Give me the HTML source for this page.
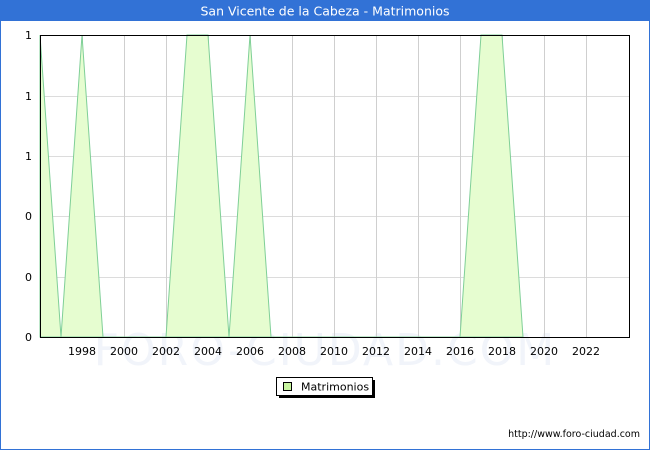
<!DOCTYPE html>
<html><head><meta charset="utf-8"><style>
body{margin:0;width:650px;height:450px;overflow:hidden;background:#fff;font-family:"DejaVu Sans","Liberation Sans",sans-serif}
</style></head><body>
<svg width="650" height="450" xmlns="http://www.w3.org/2000/svg" font-family="DejaVu Sans, Liberation Sans, sans-serif">
<rect x="0.5" y="0.5" width="649" height="449" fill="#fff" stroke="#3272d6" stroke-width="1"/>
<rect x="0" y="0" width="650" height="21" fill="#3272d6"/>
<text x="325" y="15.5" fill="#fff" font-size="12.5" text-anchor="middle">San Vicente de la Cabeza - Matrimonios</text>
<text x="325" y="365" fill="#f1f4fa" font-size="44" text-anchor="middle" letter-spacing="2">FORO-CIUDAD.COM</text>
<g stroke="#dcdcdc" stroke-width="1">
<line x1="40" y1="96.5" x2="630" y2="96.5"/><line x1="40" y1="156.5" x2="630" y2="156.5"/>
<line x1="40" y1="216.5" x2="630" y2="216.5"/><line x1="40" y1="277.5" x2="630" y2="277.5"/>
</g>
<g stroke="#cfcfcf" stroke-width="1">
<line x1="82.5" y1="35" x2="82.5" y2="338"/><line x1="124.5" y1="35" x2="124.5" y2="338"/>
<line x1="166.5" y1="35" x2="166.5" y2="338"/><line x1="208.5" y1="35" x2="208.5" y2="338"/>
<line x1="250.5" y1="35" x2="250.5" y2="338"/><line x1="292.5" y1="35" x2="292.5" y2="338"/>
<line x1="334.5" y1="35" x2="334.5" y2="338"/><line x1="376.5" y1="35" x2="376.5" y2="338"/>
<line x1="418.5" y1="35" x2="418.5" y2="338"/><line x1="460.5" y1="35" x2="460.5" y2="338"/>
<line x1="502.5" y1="35" x2="502.5" y2="338"/><line x1="544.5" y1="35" x2="544.5" y2="338"/>
<line x1="586.5" y1="35" x2="586.5" y2="338"/>
</g>
<polygon fill="#e6fdd0" stroke="#7fcf97" stroke-width="1" points="40,35 61,337 82,35 103,337 166,337 187,35 208,35 229,337 250,35 271,337 460,337 481,35 502,35 523,337 40,337"/>
<rect x="40.5" y="35.5" width="589" height="302" fill="none" stroke="#000" stroke-width="1"/>
<g font-size="11" fill="#000" text-anchor="end">
<text x="32" y="39">1</text><text x="32" y="100">1</text><text x="32" y="160">1</text>
<text x="32" y="220">0</text><text x="32" y="281">0</text><text x="32" y="341">0</text>
</g>
<g font-size="11" fill="#000" text-anchor="middle">
<text x="82" y="355">1998</text><text x="124" y="355">2000</text><text x="166" y="355">2002</text>
<text x="208" y="355">2004</text><text x="250" y="355">2006</text><text x="292" y="355">2008</text>
<text x="334" y="355">2010</text><text x="376" y="355">2012</text><text x="418" y="355">2014</text>
<text x="460" y="355">2016</text><text x="502" y="355">2018</text><text x="544" y="355">2020</text>
<text x="586" y="355">2022</text>
</g>
<rect x="279" y="380" width="96" height="18" fill="#000"/>
<rect x="276.5" y="377.5" width="96" height="18" fill="#fff" stroke="#000"/>
<rect x="283.5" y="382.5" width="8" height="8" fill="#c8f5a0" stroke="#000"/>
<text x="301" y="390.5" font-size="11" fill="#000">Matrimonios</text>
<text x="640" y="437" font-size="9.5" fill="#000" text-anchor="end">http://www.foro-ciudad.com</text>
</svg>
</body></html>
